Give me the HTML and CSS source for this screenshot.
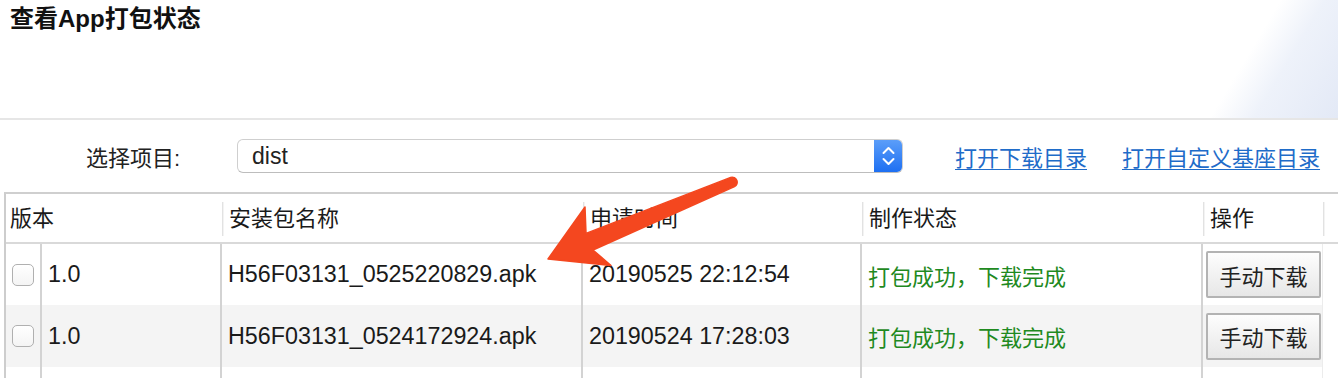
FILE: index.html
```html
<!DOCTYPE html>
<html lang="zh-CN">
<head>
<meta charset="utf-8">
<title>查看App打包状态</title>
<link rel="stylesheet" href="styles.css">
</head>
<body>
<div class="page">
  <header class="page-header">
    <h1 class="title">查看App打包状态</h1>
  </header>

  <div class="toolbar">
    <label class="field-label">选择项目:</label>
    <div class="select">
      <span class="select-value">dist</span>
      <span class="select-btn">
        <svg width="29" height="34" viewBox="0 0 29 34">
          <path d="M9.5 14 L14.5 9 L19.5 14" fill="none" stroke="#fff" stroke-width="2" stroke-linecap="round" stroke-linejoin="round"/>
          <path d="M9.5 20 L14.5 25 L19.5 20" fill="none" stroke="#fff" stroke-width="2" stroke-linecap="round" stroke-linejoin="round"/>
        </svg>
      </span>
    </div>
    <a class="link link-first" href="#">打开下载目录</a>
    <a class="link" href="#">打开自定义基座目录</a>
  </div>

  <div class="grid">
    <div class="thead">
      <div class="th th-ver">版本</div>
      <div class="th">安装包名称</div>
      <div class="th">申请时间</div>
      <div class="th">制作状态</div>
      <div class="th">操作</div>
      <div class="th th-gutter"></div>
    </div>

    <div class="row">
      <div class="td td-chk"><span class="checkbox"></span></div>
      <div class="td latin">1.0</div>
      <div class="td latin">H56F03131_0525220829.apk</div>
      <div class="td latin">20190525 22:12:54</div>
      <div class="td status">打包成功，下载完成</div>
      <div class="td td-op"><button class="btn">手动下载</button></div>
      <div class="td-gutter"></div>
    </div>

    <div class="row row-alt">
      <div class="td td-chk"><span class="checkbox"></span></div>
      <div class="td latin">1.0</div>
      <div class="td latin">H56F03131_0524172924.apk</div>
      <div class="td latin">20190524 17:28:03</div>
      <div class="td status">打包成功，下载完成</div>
      <div class="td td-op"><button class="btn">手动下载</button></div>
      <div class="td-gutter"></div>
    </div>

    <div class="row row-filler">
      <div class="td td-chk"></div>
      <div class="td"></div>
      <div class="td"></div>
      <div class="td"></div>
      <div class="td"></div>
      <div class="td td-op"></div>
      <div class="td-gutter"></div>
    </div>
  </div>

  <svg class="arrow" width="1338" height="378" viewBox="0 0 1338 378">
    <path d="M548 259 L611 265.5 L593 250 L734.5 186.6 A5 5 0 0 0 730.7 177.4 L586 233.4 L585 207 Z" fill="#f4471f" stroke="#f4471f" stroke-width="1.5" stroke-linejoin="round"/>
  </svg>
</div>
</body>
</html>
```

FILE: styles.css
```css
* { box-sizing: border-box; }

html, body {
  margin: 0;
  padding: 0;
  background: #fff;
}

body {
  font-family: "Liberation Sans", "Noto Sans CJK SC", sans-serif;
  font-size: 22px;
  color: #1a1a1a;
  overflow: hidden;
}

.page {
  position: relative;
  width: 1338px;
  height: 378px;
  overflow: hidden;
}

.page-header {
  height: 120px;
  border-bottom: 2px solid #e6e6e6;
  padding: 4px 0 0 10px;
  background: linear-gradient(121deg, rgba(255,255,255,0) 42%, #eef2fa 62%, #e3e9f6 100%) right top / 150px 100% no-repeat;
}

.title {
  margin: 0;
  font-size: 24px;
  line-height: 29px;
  font-weight: bold;
  color: #111;
}

.toolbar {
  display: flex;
  align-items: center;
  height: 34px;
  margin-top: 19px;
  padding-left: 86px;
}

.field-label {
  width: 151px;
  color: #222;
}

.select {
  display: flex;
  align-items: center;
  width: 666px;
  height: 34px;
  border: 1px solid #cfcfcf;
  border-bottom-color: #bdbdbd;
  border-radius: 6px;
  background: #fff;
  overflow: hidden;
}

.select-value {
  flex: 1;
  padding-left: 14px;
  line-height: 32px;
  font-size: 23px;
  color: #222;
}

.select-btn {
  display: flex;
  width: 29px;
  height: 34px;
  margin: -1px -1px -1px 0;
  border-radius: 0 6px 6px 0;
  background: linear-gradient(#5d9ff9, #1c6ef2);
}

.link {
  color: #1f6cc9;
  text-decoration: underline;
  text-underline-offset: 3px;
  text-decoration-thickness: 1px;
}

.link-first {
  margin-left: 52px;
  margin-right: 35px;
}

.grid {
  margin: 19px 0 0 4px;
  border-left: 2px solid #cdcdcd;
  border-top: 2px solid #cfcfcf;
}

.thead {
  display: grid;
  grid-template-columns: 216px 361px 279px 341px 120px 1fr;
  padding: 8px 0 6px;
  border-bottom: 2px solid #d9d9d9;
}

.th {
  height: 34px;
  line-height: 34px;
  padding-left: 6px;
  border-left: 1px solid #e2e2e2;
  box-shadow: inset 1px 0 0 #f3f3f3;
  white-space: nowrap;
}

.th-ver {
  border-left: none;
  box-shadow: none;
  padding-left: 4px;
}

.row {
  display: grid;
  grid-template-columns: 36px 180px 361px 279px 341px 120px 1fr;
  height: 61px;
}

.row-alt {
  height: 62px;
}

.row-filler {
  height: 12px;
}

.row-alt .td {
  background: #f4f4f4;
}

.td {
  display: flex;
  align-items: center;
  padding-left: 6px;
  border-right: 2px solid #d3d3d3;
  white-space: nowrap;
  color: #1a1a1a;
}

.latin {
  font-size: 23.3px;
}

.td-chk {
  padding-left: 6px;
}

.td-op {
  padding-left: 3px;
  border-right: 1px solid #ececec;
}

.td-gutter {
  background: #fff;
}

.checkbox {
  display: block;
  width: 22px;
  height: 22px;
  border: 1px solid #b0b0b0;
  border-radius: 5px;
  background: linear-gradient(#ffffff, #f4f4f4);
}

.status {
  color: #1f8a1f;
}

.btn {
  width: 115px;
  height: 47px;
  padding: 0;
  font-family: inherit;
  font-size: 22px;
  color: #222;
  border: 2px solid #b3b3b3;
  border-radius: 2px;
  background: linear-gradient(#fdfdfd, #e7e7e7);
}

.arrow {
  position: absolute;
  left: 0;
  top: 0;
  pointer-events: none;
}
```
